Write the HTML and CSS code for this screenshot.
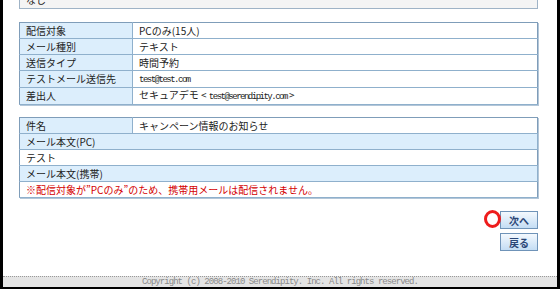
FILE: index.html
```html
<!DOCTYPE html>
<html lang="ja">
<head>
    <meta charset="UTF-8" />
    <title>配信内容の確認</title>
    <link rel="stylesheet" href="styles.css">
</head>
<body>
    <div class="page">
        <div class="content">
            <div class="note-box">なし</div>

            <table class="info">
                <tr><td class="label">配信対象</td><td>PCのみ(15人)</td></tr>
                <tr><td class="label">メール種別</td><td>テキスト</td></tr>
                <tr><td class="label">送信タイプ</td><td>時間予約</td></tr>
                <tr><td class="label">テストメール送信先</td><td><span class="mono">test@test.com</span></td></tr>
                <tr><td class="label">差出人</td><td>セキュアデモ &lt; <span class="mono">test@serendipity.com</span> &gt;</td></tr>
            </table>

            <table class="info mail">
                <tr><td class="label">件名</td><td>キャンペーン情報のお知らせ</td></tr>
                <tr><td class="label" colspan="2">メール本文(PC)</td></tr>
                <tr><td colspan="2">テスト</td></tr>
                <tr><td class="label" colspan="2">メール本文(携帯)</td></tr>
                <tr><td class="warn" colspan="2">※配信対象が”PCのみ”のため、携帯用メールは配信されません。</td></tr>
            </table>

            <div class="actions">
                <div class="btn-wrap">
                    <span class="mark"></span>
                    <button class="btn">次へ</button>
                </div>
                <button class="btn">戻る</button>
            </div>
        </div>

        <div class="footer">Copyright (c) 2008-2010 Serendipity. Inc. All rights reserved.</div>
    </div>
</body>
</html>
```

FILE: styles.css
```css
* {
    box-sizing: border-box;
}

body {
    margin: 0;
    height: 289px;
    overflow: hidden;
    background: #000;
    font-family: "Noto Sans CJK JP", sans-serif;
    font-size: 10px;
    color: #222;
}

.page {
    height: 287px;
    margin: 0 3px;
    background: #fff;
    display: flex;
    flex-direction: column;
}

.content {
    flex: 1;
    padding: 0 19px 0 16px;
}

.note-box {
    height: 18px;
    margin-top: -9px;
    padding: 0 6px;
    line-height: 16px;
    border: 1px solid #9fb3c6;
    background: #f4f4f4;
}

.info {
    width: 100%;
    margin-top: 13px;
    border-collapse: collapse;
    border: 1px solid #7f9db9;
    box-shadow: 1px 1px 0 #b3c6d8;
}

.info td {
    height: 16px;
    padding: 0 6px;
    line-height: 14px;
    border-bottom: 1px solid #8fb0cc;
    white-space: nowrap;
}

.info td.label {
    width: 113px;
    background: #dceefc;
    border-right: 1px solid #8fb0cc;
}

.info.mail {
    margin-top: 12px;
}

.info td.warn {
    color: #d40000;
}

.mono {
    font-family: "Liberation Mono", monospace;
    font-size: 9px;
    letter-spacing: -1.5px;
}

.actions {
    margin-top: 13px;
    display: flex;
    flex-direction: column;
    align-items: flex-end;
    gap: 4px;
}

.btn-wrap {
    position: relative;
}

.btn {
    display: block;
    width: 38px;
    height: 18px;
    padding: 0;
    border: 1px solid #6f93b8;
    background: linear-gradient(#f4f9fe, #c4ddf4);
    font-family: "Noto Sans CJK JP", sans-serif;
    font-size: 10px;
    font-weight: 700;
    color: #2a4676;
}

.mark {
    position: absolute;
    left: -16px;
    top: -1px;
    width: 17px;
    height: 18px;
    border: 3px solid #ee1c1c;
    border-radius: 50%;
}

.footer {
    height: 11px;
    border-top: 1px dotted #999;
    background: #e4e4e4;
    text-align: center;
    font-family: "Liberation Mono", monospace;
    font-size: 9px;
    line-height: 10px;
    letter-spacing: -0.95px;
    color: #8a8a8a;
}
```
